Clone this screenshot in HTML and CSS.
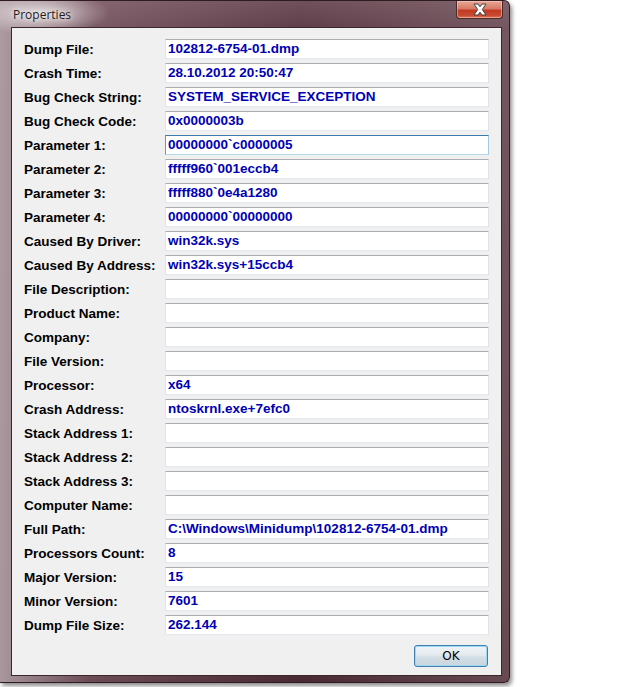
FILE: index.html
```html
<!DOCTYPE html>
<html>
<head>
<meta charset="utf-8">
<link rel="stylesheet" href="styles.css">
</head>
<body>
<div class="window">
  <div class="titlebar">
    <span class="title">Properties</span>
    <div class="close">
      <svg width="20" height="13" viewBox="0 0 20 13">
        <path d="M4 1 L8 1 L10 3.8 L12 1 L16 1 L12.3 6.5 L16 12 L12 12 L10 9.2 L8 12 L4 12 L7.7 6.5 Z" fill="#ffffff" stroke="#404040" stroke-width="1" stroke-linejoin="round"/>
      </svg>
    </div>
  </div>
  <div class="client">
    <div class="rows">
      <div class="row"><span class="label">Dump File:</span><span class="box">102812-6754-01.dmp</span></div>
      <div class="row"><span class="label">Crash Time:</span><span class="box">28.10.2012 20:50:47</span></div>
      <div class="row"><span class="label">Bug Check String:</span><span class="box">SYSTEM_SERVICE_EXCEPTION</span></div>
      <div class="row"><span class="label">Bug Check Code:</span><span class="box">0x0000003b</span></div>
      <div class="row"><span class="label">Parameter 1:</span><span class="box focus">00000000`c0000005</span></div>
      <div class="row"><span class="label">Parameter 2:</span><span class="box">fffff960`001eccb4</span></div>
      <div class="row"><span class="label">Parameter 3:</span><span class="box">fffff880`0e4a1280</span></div>
      <div class="row"><span class="label">Parameter 4:</span><span class="box">00000000`00000000</span></div>
      <div class="row"><span class="label">Caused By Driver:</span><span class="box">win32k.sys</span></div>
      <div class="row"><span class="label">Caused By Address:</span><span class="box">win32k.sys+15ccb4</span></div>
      <div class="row"><span class="label">File Description:</span><span class="box"></span></div>
      <div class="row"><span class="label">Product Name:</span><span class="box"></span></div>
      <div class="row"><span class="label">Company:</span><span class="box"></span></div>
      <div class="row"><span class="label">File Version:</span><span class="box"></span></div>
      <div class="row"><span class="label">Processor:</span><span class="box">x64</span></div>
      <div class="row"><span class="label">Crash Address:</span><span class="box">ntoskrnl.exe+7efc0</span></div>
      <div class="row"><span class="label">Stack Address 1:</span><span class="box"></span></div>
      <div class="row"><span class="label">Stack Address 2:</span><span class="box"></span></div>
      <div class="row"><span class="label">Stack Address 3:</span><span class="box"></span></div>
      <div class="row"><span class="label">Computer Name:</span><span class="box"></span></div>
      <div class="row"><span class="label">Full Path:</span><span class="box">C:\Windows\Minidump\102812-6754-01.dmp</span></div>
      <div class="row"><span class="label">Processors Count:</span><span class="box">8</span></div>
      <div class="row"><span class="label">Major Version:</span><span class="box">15</span></div>
      <div class="row"><span class="label">Minor Version:</span><span class="box">7601</span></div>
      <div class="row"><span class="label">Dump File Size:</span><span class="box">262.144</span></div>
    </div>
    <div class="actions">
      <button class="ok">OK</button>
    </div>
  </div>
</div>
</body>
</html>
```
FILE: styles.css
```css
html, body {
  margin: 0;
  padding: 0;
  background: #ffffff;
  width: 621px;
  height: 687px;
  overflow: hidden;
}

.window {
  box-sizing: border-box;
  width: 510px;
  height: 683px;
  border: 1px solid #2e1c20;
  border-left: none;
  border-radius: 0 6px 6px 0;
  background:
    radial-gradient(ellipse 70px 22px at 40px 12px, rgba(235,228,230,0.85), rgba(235,228,230,0) 100%),
    linear-gradient(90deg, rgba(185,170,175,0.85) 0px, rgba(140,110,120,0.5) 90px, rgba(70,40,50,0.25) 300px, rgba(130,105,112,0.5) 510px),
    linear-gradient(180deg, #7e5e68 0px, #65434e 30px, #5a3a44 300px, #4a2a32 683px);
  box-shadow: 2px 3px 4px rgba(0,0,0,0.45);
  display: flex;
  flex-direction: column;
}

.titlebar {
  height: 26px;
  display: flex;
  justify-content: space-between;
  align-items: flex-start;
}

.title {
  margin-left: 13px;
  margin-top: 5px;
  font-family: "Open Sans", "Noto Sans", sans-serif;
  font-size: 12px;
  color: #1c1c1c;
  text-shadow: 0 0 8px rgba(255,255,255,0.9), 0 0 4px rgba(255,255,255,0.8);
}

.close {
  width: 47px;
  height: 18px;
  margin-right: 6px;
  box-sizing: border-box;
  border: 1px solid #4a2a2a;
  border-top: none;
  border-radius: 0 0 4px 4px;
  background: linear-gradient(180deg, #e8a898 0%, #d77a66 45%, #c23a22 55%, #c84a30 85%, #e07a5a 100%);
  box-shadow: inset 0 0 0 1px rgba(255,210,200,0.5);
  display: flex;
  align-items: center;
  justify-content: center;
}

.client {
  margin: 0 7px 6px 11px;
  flex: 1;
  border: 1px solid #3a262b;
  background: #f0f0f0;
  padding: 11px 12px 0 12px;
  display: flex;
  flex-direction: column;
}

.rows {
  display: flex;
  flex-direction: column;
  gap: 4px;
}

.row {
  display: flex;
  align-items: center;
  height: 20px;
}

.label {
  width: 141px;
  flex: none;
  font-family: "Liberation Sans", Arial, sans-serif;
  font-weight: bold;
  font-size: 13.5px;
  color: #000000;
}

.box {
  box-sizing: border-box;
  width: 324px;
  height: 20px;
  border: 1px solid #abadb3;
  border-left-color: #e2e3ea;
  border-right-color: #e2e3ea;
  border-bottom-color: #e3e9ef;
  background: #ffffff;
  padding: 0 0 0 2px;
  font-family: "Liberation Sans", Arial, sans-serif;
  font-weight: bold;
  font-size: 13.5px;
  line-height: 18px;
  color: #0000b4;
  white-space: nowrap;
  overflow: hidden;
}

.box.focus {
  border-color: #5d9ad0;
  border-top-color: #3d7bad;
  border-right-color: #a4c9e3;
  border-bottom-color: #b7d9ed;
}

.actions {
  display: flex;
  justify-content: flex-end;
  margin-top: 10px;
  padding-right: 1px;
}

.ok {
  width: 74px;
  height: 22px;
  box-sizing: border-box;
  border: 1px solid #3c7fb1;
  border-radius: 3px;
  background: linear-gradient(180deg, #eef3f6 0%, #e4ebef 45%, #d3dee5 55%, #c9d6de 100%);
  box-shadow: inset 0 0 0 1px #9fd7f5;
  font-family: "DejaVu Sans", "Liberation Sans", sans-serif;
  font-size: 12px;
  color: #000000;
  padding: 0;
}
```
